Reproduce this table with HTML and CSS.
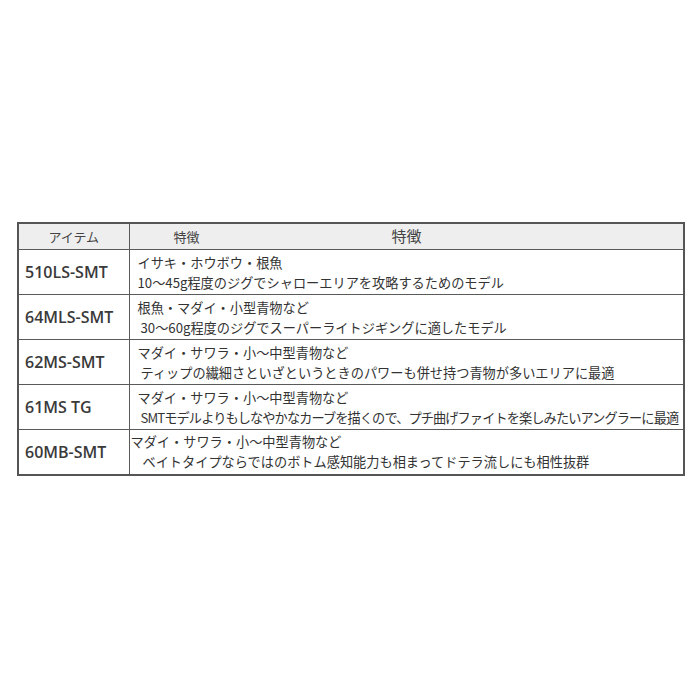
FILE: index.html
```html
<!DOCTYPE html>
<html lang="ja">
<head>
<meta charset="utf-8">
<link rel="stylesheet" href="styles.css">
</head>
<body>
<div class="page">
<table class="spec">
  <colgroup><col class="c-item"><col class="c-desc"></colgroup>
  <thead>
    <tr>
      <th class="h-item">アイテム</th>
      <th class="h-desc"><span class="h1">特徴</span><span class="h2">特徴</span></th>
    </tr>
  </thead>
  <tbody>
    <tr>
      <td class="item">510LS-SMT</td>
      <td class="desc"><div class="l1">イサキ・ホウボウ・根魚</div><div class="i1">10〜45g程度のジグでシャローエリアを攻略するためのモデル</div></td>
    </tr>
    <tr>
      <td class="item">64MLS-SMT</td>
      <td class="desc"><div class="l1">根魚・マダイ・小型青物など</div><div class="i2">30〜60g程度のジグでスーパーライトジギングに適したモデル</div></td>
    </tr>
    <tr>
      <td class="item">62MS-SMT</td>
      <td class="desc"><div class="l1">マダイ・サワラ・小〜中型青物など</div><div class="i2">ティップの繊細さといざというときのパワーも併せ持つ青物が多いエリアに最適</div></td>
    </tr>
    <tr>
      <td class="item">61MS TG</td>
      <td class="desc"><div class="l1">マダイ・サワラ・小〜中型青物など</div><div class="i2 tight">SMTモデルよりもしなやかなカーブを描くので、プチ曲げファイトを楽しみたいアングラーに最適</div></td>
    </tr>
    <tr>
      <td class="item">60MB-SMT</td>
      <td class="desc"><div class="l1 i0">マダイ・サワラ・小〜中型青物など</div><div class="i3">ベイトタイプならではのボトム感知能力も相まってドテラ流しにも相性抜群</div></td>
    </tr>
  </tbody>
</table>
</div>
</body>
</html>
```

FILE: styles.css
```css
html, body {
  margin: 0;
  padding: 0;
  background: #ffffff;
}
.page {
  padding: 222px 0 0 17px;
}
.spec {
  border-collapse: collapse;
  width: 668px;
  table-layout: fixed;
  font-family: "Noto Sans CJK JP", "Noto Sans", sans-serif;
  color: #333333;
  border: 2px solid #555555;
}
.c-item { width: 111px; }
.spec th, .spec td {
  border: 1.5px solid #5a5a5a;
  padding: 0;
}
.spec thead tr {
  height: 26px;
  background: #eeeeee;
}
.spec th {
  font-weight: normal;
  color: #444444;
  vertical-align: middle;
  line-height: 24px;
}
.h-item {
  font-size: 13px;
  text-align: center;
}
.h-desc {
  text-align: left;
  font-size: 13px;
}
.h1 {
  margin-left: 44px;
}
.h2 {
  margin-left: 192px;
  font-size: 15px;
}
.spec tbody tr {
  height: 45px;
}
.item {
  font-family: "Open Sans", "Noto Sans", sans-serif;
  font-weight: 600;
  font-size: 16px;
  color: #3a3a3a;
  padding-left: 6px !important;
  vertical-align: middle;
}
.desc {
  font-size: 13.2px;
  line-height: 20px;
  padding: 2px 0 1px 8px !important;
  vertical-align: middle;
  white-space: nowrap;
  overflow: hidden;
}
.i1 { padding-left: 0; }
.i2 { padding-left: 3px; }
.i3 { padding-left: 5px; }
.i0 { margin-left: -7px; }
.tight { letter-spacing: -0.9px; }
```
